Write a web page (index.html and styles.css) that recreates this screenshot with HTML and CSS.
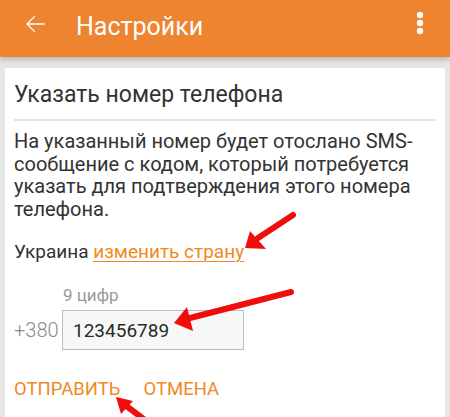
FILE: index.html
```html
<!DOCTYPE html>
<html lang="ru">
<head>
    <meta charset="UTF-8">
    <meta name="viewport" content="width=device-width, initial-scale=1.0">
    <title>Настройки</title>
    <link rel="stylesheet" href="styles.css">
</head>
<body>
    <div class="toolbar">
        <svg class="back" width="26" height="26" viewBox="0 0 24 24">
            <path d="M21 11.2H6.2l6-6L11.4 4.4 3.8 12l7.6 7.6.8-.8-6-6H21z" fill="#fff"/>
        </svg>
        <div class="title">Настройки</div>
        <svg class="menu" width="8" height="26" viewBox="0 0 8 26">
            <circle cx="4" cy="4" r="3.2" fill="#fff"/>
            <circle cx="4" cy="12" r="3.2" fill="#fff"/>
            <circle cx="4" cy="20" r="3.2" fill="#fff"/>
        </svg>
    </div>

    <div class="card">
        <h2 class="card-title">Указать номер телефона</h2>
        <p class="info">На указанный номер будет отослано SMS-сообщение с кодом, который потребуется указать для подтверждения этого номера телефона.</p>
        <div class="country">Украина <a href="#" class="link">изменить страну</a></div>
        <div class="phone">
            <div class="hint">9 цифр</div>
            <div class="phone-row">
                <span class="prefix">+380</span>
                <div class="field">123456789</div>
            </div>
        </div>
        <div class="actions">
            <span class="btn">Отправить</span>
            <span class="btn">Отмена</span>
        </div>
    </div>

    <svg class="arrows" width="450" height="417" viewBox="0 0 450 417">
        <g stroke="#f20d0d" stroke-width="6" stroke-linecap="round" fill="none">
            <line x1="293" y1="215" x2="258" y2="238"/>
            <line x1="291" y1="292" x2="190" y2="318"/>
            <line x1="145" y1="420" x2="125" y2="405"/>
        </g>
        <g fill="#f20d0d">
            <polygon points="245,248 250,231 266,249"/>
            <polygon points="174,323 187,307 193,331"/>
            <polygon points="116,397 133,401 121,414"/>
        </g>
    </svg>
</body>
</html>
```

FILE: styles.css
```css
body {
    margin: 0;
    height: 417px;
    overflow: hidden;
    background-color: #e6e6e6;
    font-family: Roboto, "Noto Sans", sans-serif;
    position: relative;
}
.toolbar {
    height: 57px;
    background-color: #ee8330;
    display: flex;
    align-items: center;
    padding: 0 0 0 22px;
    box-shadow: 0 2px 6px rgba(0, 0, 0, 0.25);
    position: relative;
}
.back {
    margin-top: -9px;
}
.title {
    color: white;
    font-size: 25px;
    margin-left: 28px;
    margin-top: -5px;
    flex: 1;
}
.menu {
    margin-right: 26px;
    margin-top: -10px;
}
.card {
    box-sizing: border-box;
    background-color: white;
    margin: 11px 5px 0 5px;
    padding: 12px 9px 0 9px;
    height: 349px;
}
.card-title {
    margin: 0;
    font-weight: normal;
    font-size: 23px;
    line-height: 30px;
    color: #333;
    padding-bottom: 9px;
    border-bottom: 2px solid #e4e4e4;
}
.info {
    margin: 9px 0 0 0;
    font-size: 20px;
    line-height: 22.5px;
    color: #333;
    padding-right: 8px;
}
.country {
    margin-top: 20px;
    font-size: 19px;
    line-height: 24px;
    color: #333;
}
.link {
    color: #f0891f;
    text-decoration: underline;
    text-underline-offset: 3px;
    text-decoration-thickness: 1px;
}
.phone {
    margin-top: 20px;
}
.hint {
    margin-left: 49px;
    font-size: 17px;
    line-height: 22px;
    color: #999;
}
.phone-row {
    display: flex;
    align-items: center;
    margin-top: 4px;
}
.prefix {
    font-size: 20px;
    font-weight: 300;
    color: #8a8a8a;
    width: 48px;
}
.field {
    width: 170px;
    height: 38px;
    border: 1px solid #bcbcbc;
    background-color: #f7f7f7;
    font-size: 19px;
    line-height: 40px;
    padding-left: 10px;
    color: #2a2a2a;
}
.actions {
    display: flex;
    gap: 23px;
    margin-top: 28px;
}
.btn {
    font-size: 18.5px;
    color: #f0891f;
    text-transform: uppercase;
}
.arrows {
    position: absolute;
    left: 0;
    top: 0;
}
```
